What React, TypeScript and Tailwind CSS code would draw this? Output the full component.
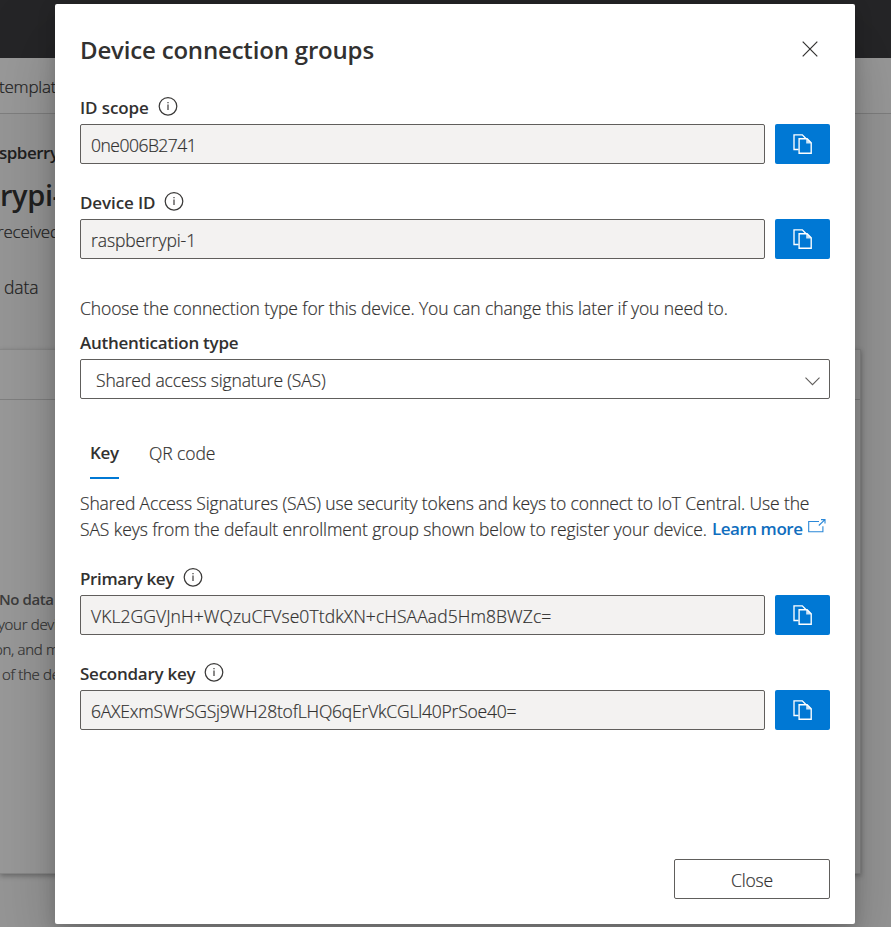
import type { ReactNode } from 'react';

function InfoIcon() {
  return (
    <svg width="20" height="20" viewBox="0 0 20 20" fill="none" className="shrink-0">
      <circle cx="10" cy="10.3" r="8.8" stroke="#3b3a39" strokeWidth="1.25" />
      <path d="M10 8.6v5.4" stroke="#3b3a39" strokeWidth="1.2" />
      <path d="M9.4 6h1.2v1.2H9.4z" fill="#3b3a39" />
    </svg>
  );
}

function CopyIcon() {
  return (
    <svg width="20" height="20" viewBox="0 0 20 20" fill="none" stroke="#fff" strokeWidth="1.35">
      <path d="M5.6 15.5H1V.8h8.3l3.6 3.6" />
      <path d="M6.1 4.7h8l4.1 4.1v10.4H6.1z" />
      <path d="M13.2 4.6h1l4 4v.8h-5z" fill="#fff" fillOpacity=".8" stroke="none" />
    </svg>
  );
}

function Field({ label, value, labelClass, valueClass }: { label: string; value: string; labelClass: string; valueClass: string }) {
  return (
    <div className="flex h-[75px] flex-col">
      <div className="flex h-[35px] items-center gap-[9px] text-[17px] font-semibold [-webkit-text-stroke-width:0px]">
        <span className={'pt-0.5 ' + labelClass}>{label}</span>
        <span className="-mt-px"><InfoIcon /></span>
      </div>
      <div className="flex h-10 shrink-0 gap-2.5">
        <div className="flex flex-1 items-center rounded-[2px] border border-[#605e5c] bg-[#f3f2f1] px-2.5 pt-[2px] text-[17.5px]">
          <span className={valueClass}>{value}</span>
        </div>
        <button className="flex w-[55px] items-center justify-center rounded-[2px] bg-[#0078d4]">
          <CopyIcon />
        </button>
      </div>
    </div>
  );
}

function Line({ className, children }: { className: string; children: ReactNode }) {
  return <div className={'w-max whitespace-nowrap ' + className}>{children}</div>;
}

function Backdrop() {
  return (
    <div className="flex h-full flex-col bg-[#969696] text-[#202020]">
      <div className="h-[58px] shrink-0 bg-[#252527]" />
      <div className="h-14 shrink-0 border-b border-[#7f7f7f] bg-[#999] pt-4">
        <Line className="-ml-px text-[17px] leading-[26px] tracking-[-0.2px]">templat</Line>
      </div>
      <div className="h-[235px] shrink-0">
        <Line className="-ml-[1px] pt-[26px] text-[17px] font-semibold leading-[26px] tracking-[-0.5px] [-webkit-text-stroke-width:0px]">spberry</Line>
        <Line className="pt-[8px] text-[29px] font-semibold leading-[42px] tracking-[-0.4px] [-webkit-text-stroke-width:0px]">rypi-</Line>
        <Line className="-ml-[3px] pt-[3px] text-[17px] leading-[26px] tracking-[-0.2px]">received</Line>
        <Line className="ml-1 pt-[29px] text-[17.5px] leading-[26px] tracking-[-0.1px]">data</Line>
      </div>
      <div className="h-[525px] w-[861px] shrink-0 border border-l-0 border-[#888] bg-[#999] text-[#303030] shadow-[0_2px_5px_rgba(0,0,0,0.3)]">
        <div className="h-[50px] border-b border-[#808080]" />
        <div className="pt-[187px] text-[15px] leading-[25px] tracking-[-0.3px]">
          <Line className="-ml-px font-semibold tracking-[-0.4px] text-[#3d3d3d] [-webkit-text-stroke-width:0px]">No data</Line>
          <Line className="-ml-[2px]">your devic</Line>
          <Line className="-ml-[6px]">on, and m</Line>
          <Line className="ml-[2px]">of the de</Line>
        </div>
      </div>
    </div>
  );
}

export default function App() {
  return (
    <div className="relative h-[927px] w-[891px] overflow-hidden font-['Open_Sans','Noto_Sans',sans-serif] font-light [-webkit-text-stroke-width:0.2px]">
      <Backdrop />
      <div className="absolute left-[55px] top-1 flex h-[920px] w-[800px] flex-col rounded-[2px] bg-white px-[25px] text-[#323130] shadow-[0_32px_72px_rgba(0,0,0,0.22),0_6px_18px_rgba(0,0,0,0.18)]">
        <header className="flex h-[85px] shrink-0 items-start justify-between">
          <h2 className="pt-[28px] text-[24px] font-semibold leading-9 tracking-[-0.18px] [-webkit-text-stroke-width:0px]">Device connection groups</h2>
          <svg width="16" height="16" viewBox="0 0 16 16" stroke="#323130" strokeWidth="1.2" className="mr-3 mt-[37px]">
            <path d="M.7.7l14.6 14.6M15.3.7L.7 15.3" />
          </svg>
        </header>
        <Field label="ID scope" value="0ne006B2741" labelClass="tracking-[-0.1px]" valueClass="tracking-[-0.5px]" />
        <div className="h-5 shrink-0" />
        <Field label="Device ID" value="raspberrypi-1" labelClass="tracking-[-0.1px]" valueClass="tracking-[-0.1px]" />
        <Line className="mt-9 text-[17.5px] leading-[26px] tracking-[-0.1px]">Choose the connection type for this device. You can change this later if you need to.</Line>
        <Line className="mt-[9px] text-[17px] font-semibold leading-[26px] tracking-[-0.26px] [-webkit-text-stroke-width:0px]">Authentication type</Line>
        <div className="mt-[3px] flex h-10 shrink-0 items-center justify-between rounded-[2px] border border-[#605e5c] pl-[15px] pr-[9px]">
          <span className="pt-[2px] text-[17.5px] tracking-[-0.15px]">Shared access signature (SAS)</span>
          <svg width="15" height="9" viewBox="0 0 15 9" fill="none" stroke="#605e5c" strokeWidth="1.1" className="mt-1">
            <path d="M.5.7l7 7 7-7" />
          </svg>
        </div>
        <div className="mt-[30px] flex h-[50px] shrink-0 gap-[30px] pl-2.5 text-[17px] leading-[48px]">
          <div className="h-[50px] w-[29px] border-b-2 border-[#0078d4] font-semibold tracking-[-0.3px] [-webkit-text-stroke-width:0px]">Key</div>
          <div className="text-[17.5px] tracking-[-0.1px]">QR code</div>
        </div>
        <div className="mt-[11px] text-[17.5px] leading-[26px]">
          <Line className="tracking-[-0.13px]">Shared Access Signatures (SAS) use security tokens and keys to connect to IoT Central. Use the</Line>
          <div className="flex">
            <Line className="tracking-[-0.09px]">SAS keys from the default enrollment group shown below to register your device.</Line>
            <a className="ml-[5px] flex whitespace-nowrap text-[17px] font-semibold tracking-[-0.45px] text-[#106ebe] [-webkit-text-stroke-width:0px]">
              Learn more
              <svg width="18" height="14" viewBox="0 0 18 14" fill="none" stroke="#2b88d8" strokeWidth="1.1" className="ml-[5px] mt-[3px]">
                <path d="M11 2.5H.7v10.3h14.2V7.2" />
                <path d="M10.8 6.5L16.7.8M13 .6h4v4" />
              </svg>
            </a>
          </div>
        </div>
        <div className="h-[18px] shrink-0" />
        <Field label="Primary key" value="VKL2GGVJnH+WQzuCFVse0TtdkXN+cHSAAad5Hm8BWZc=" labelClass="tracking-[-0.38px]" valueClass="tracking-[0.08px]" />
        <div className="h-5 shrink-0" />
        <Field label="Secondary key" value="6AXExmSWrSGSj9WH28tofLHQ6qErVkCGLl40PrSoe40=" labelClass="tracking-[-0.25px]" valueClass="tracking-[-0.2px]" />
        <footer className="mb-[25px] mt-auto flex shrink-0 justify-end">
          <button className="h-10 w-[156px] rounded-[2px] border border-[#605e5c] pt-[2px] text-[17.5px] tracking-[-0.2px]">Close</button>
        </footer>
      </div>
    </div>
  );
}
